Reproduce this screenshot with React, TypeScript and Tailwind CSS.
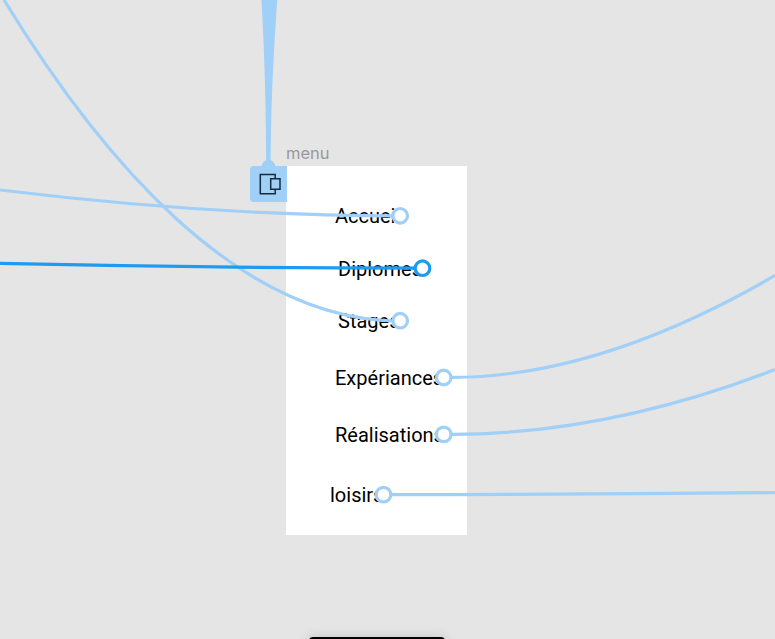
const items = [
  { label: 'Accueil', place: 'mt-[38px] ml-[49px]' },
  { label: 'Diplomes', place: 'mt-[29px] ml-[52px]' },
  { label: 'Stages', place: 'mt-[28px] ml-[52px]' },
  { label: 'Expériances', place: 'mt-[33px] ml-[49px]' },
  { label: 'Réalisations', place: 'mt-[33px] ml-[49px]' },
  { label: 'loisirs', place: 'mt-[36px] ml-[44px]' },
];

const handles = [
  { x: 400.2, y: 215.8, active: false },
  { x: 422.5, y: 268.2, active: true },
  { x: 400.2, y: 320.7, active: false },
  { x: 443.7, y: 377.5, active: false },
  { x: 443.7, y: 434.4, active: false },
  { x: 383.5, y: 494.6, active: false },
];

function MenuFrame() {
  return (
    <div className="absolute top-[145px] left-[286px] w-[181px]">
      <div className="h-[21px] font-['Inter',sans-serif] text-[16.5px] leading-[17px] text-[#999999]">menu</div>
      <nav className="flex h-[369px] flex-col items-start bg-white text-[20px] leading-6 text-black">
        {items.map((item) => (
          <span key={item.label} className={item.place}>{item.label}</span>
        ))}
      </nav>
    </div>
  );
}

function Connections() {
  return (
    <svg className="absolute inset-0" width="775" height="639" viewBox="0 0 775 639" fill="none">
      <path d="M261.5 0H277.2C273.5 55 271 100 270.7 166H266.2C266 100 264.5 55 261.5 0Z" fill="#a0cff8" />
      <circle cx="268.4" cy="166.5" r="6.8" fill="#a0cff8" />
      <g stroke="#a0cff8" strokeWidth="3.2">
        <path d="M4 0C97 152 235 321 400 321" />
        <path d="M0 190Q213 216 400 215.8" />
        <path d="M444 377.4H452Q600 377 775 275.5" />
        <path d="M444 434.4H452Q608 434 775 369.5" />
        <path d="M384 494.6Q580 494.6 775 492.6" />
      </g>
      <path d="M0 263.4Q215 268.1 422 268.1" stroke="#1e9bf0" strokeWidth="3.2" />
      {handles.map((h) => (
        <circle key={h.y} cx={h.x} cy={h.y} r="7.3" fill="white" stroke={h.active ? '#1e9bf0' : '#a0cff8'} strokeWidth="3.2" />
      ))}
    </svg>
  );
}

function OverlayBadge() {
  return (
    <div className="absolute top-[166px] left-[250px] flex h-[36px] w-[37px] items-start rounded-l-[4px] bg-[#a0cff8] pt-[7px] pl-[9px]">
      <svg width="22" height="22" viewBox="0 0 22 22" fill="none" stroke="#162c3b" strokeWidth="1.5">
        <path d="M16.2 5.5V1.5H1.3V20.8H16.2V16.5" />
        <path d="M11.7 5.8H21V16.2H11.7Z" />
      </svg>
    </div>
  );
}

export default function App() {
  return (
    <main className="relative h-[639px] w-[775px] overflow-hidden bg-[#e5e5e5] font-['Roboto',sans-serif]">
      <MenuFrame />
      <Connections />
      <OverlayBadge />
      <div className="absolute top-[637px] left-[309px] h-10 w-[136px] rounded-[4px] bg-black shadow-[0_2px_14px_rgba(0,0,0,0.2)]" />
    </main>
  );
}
